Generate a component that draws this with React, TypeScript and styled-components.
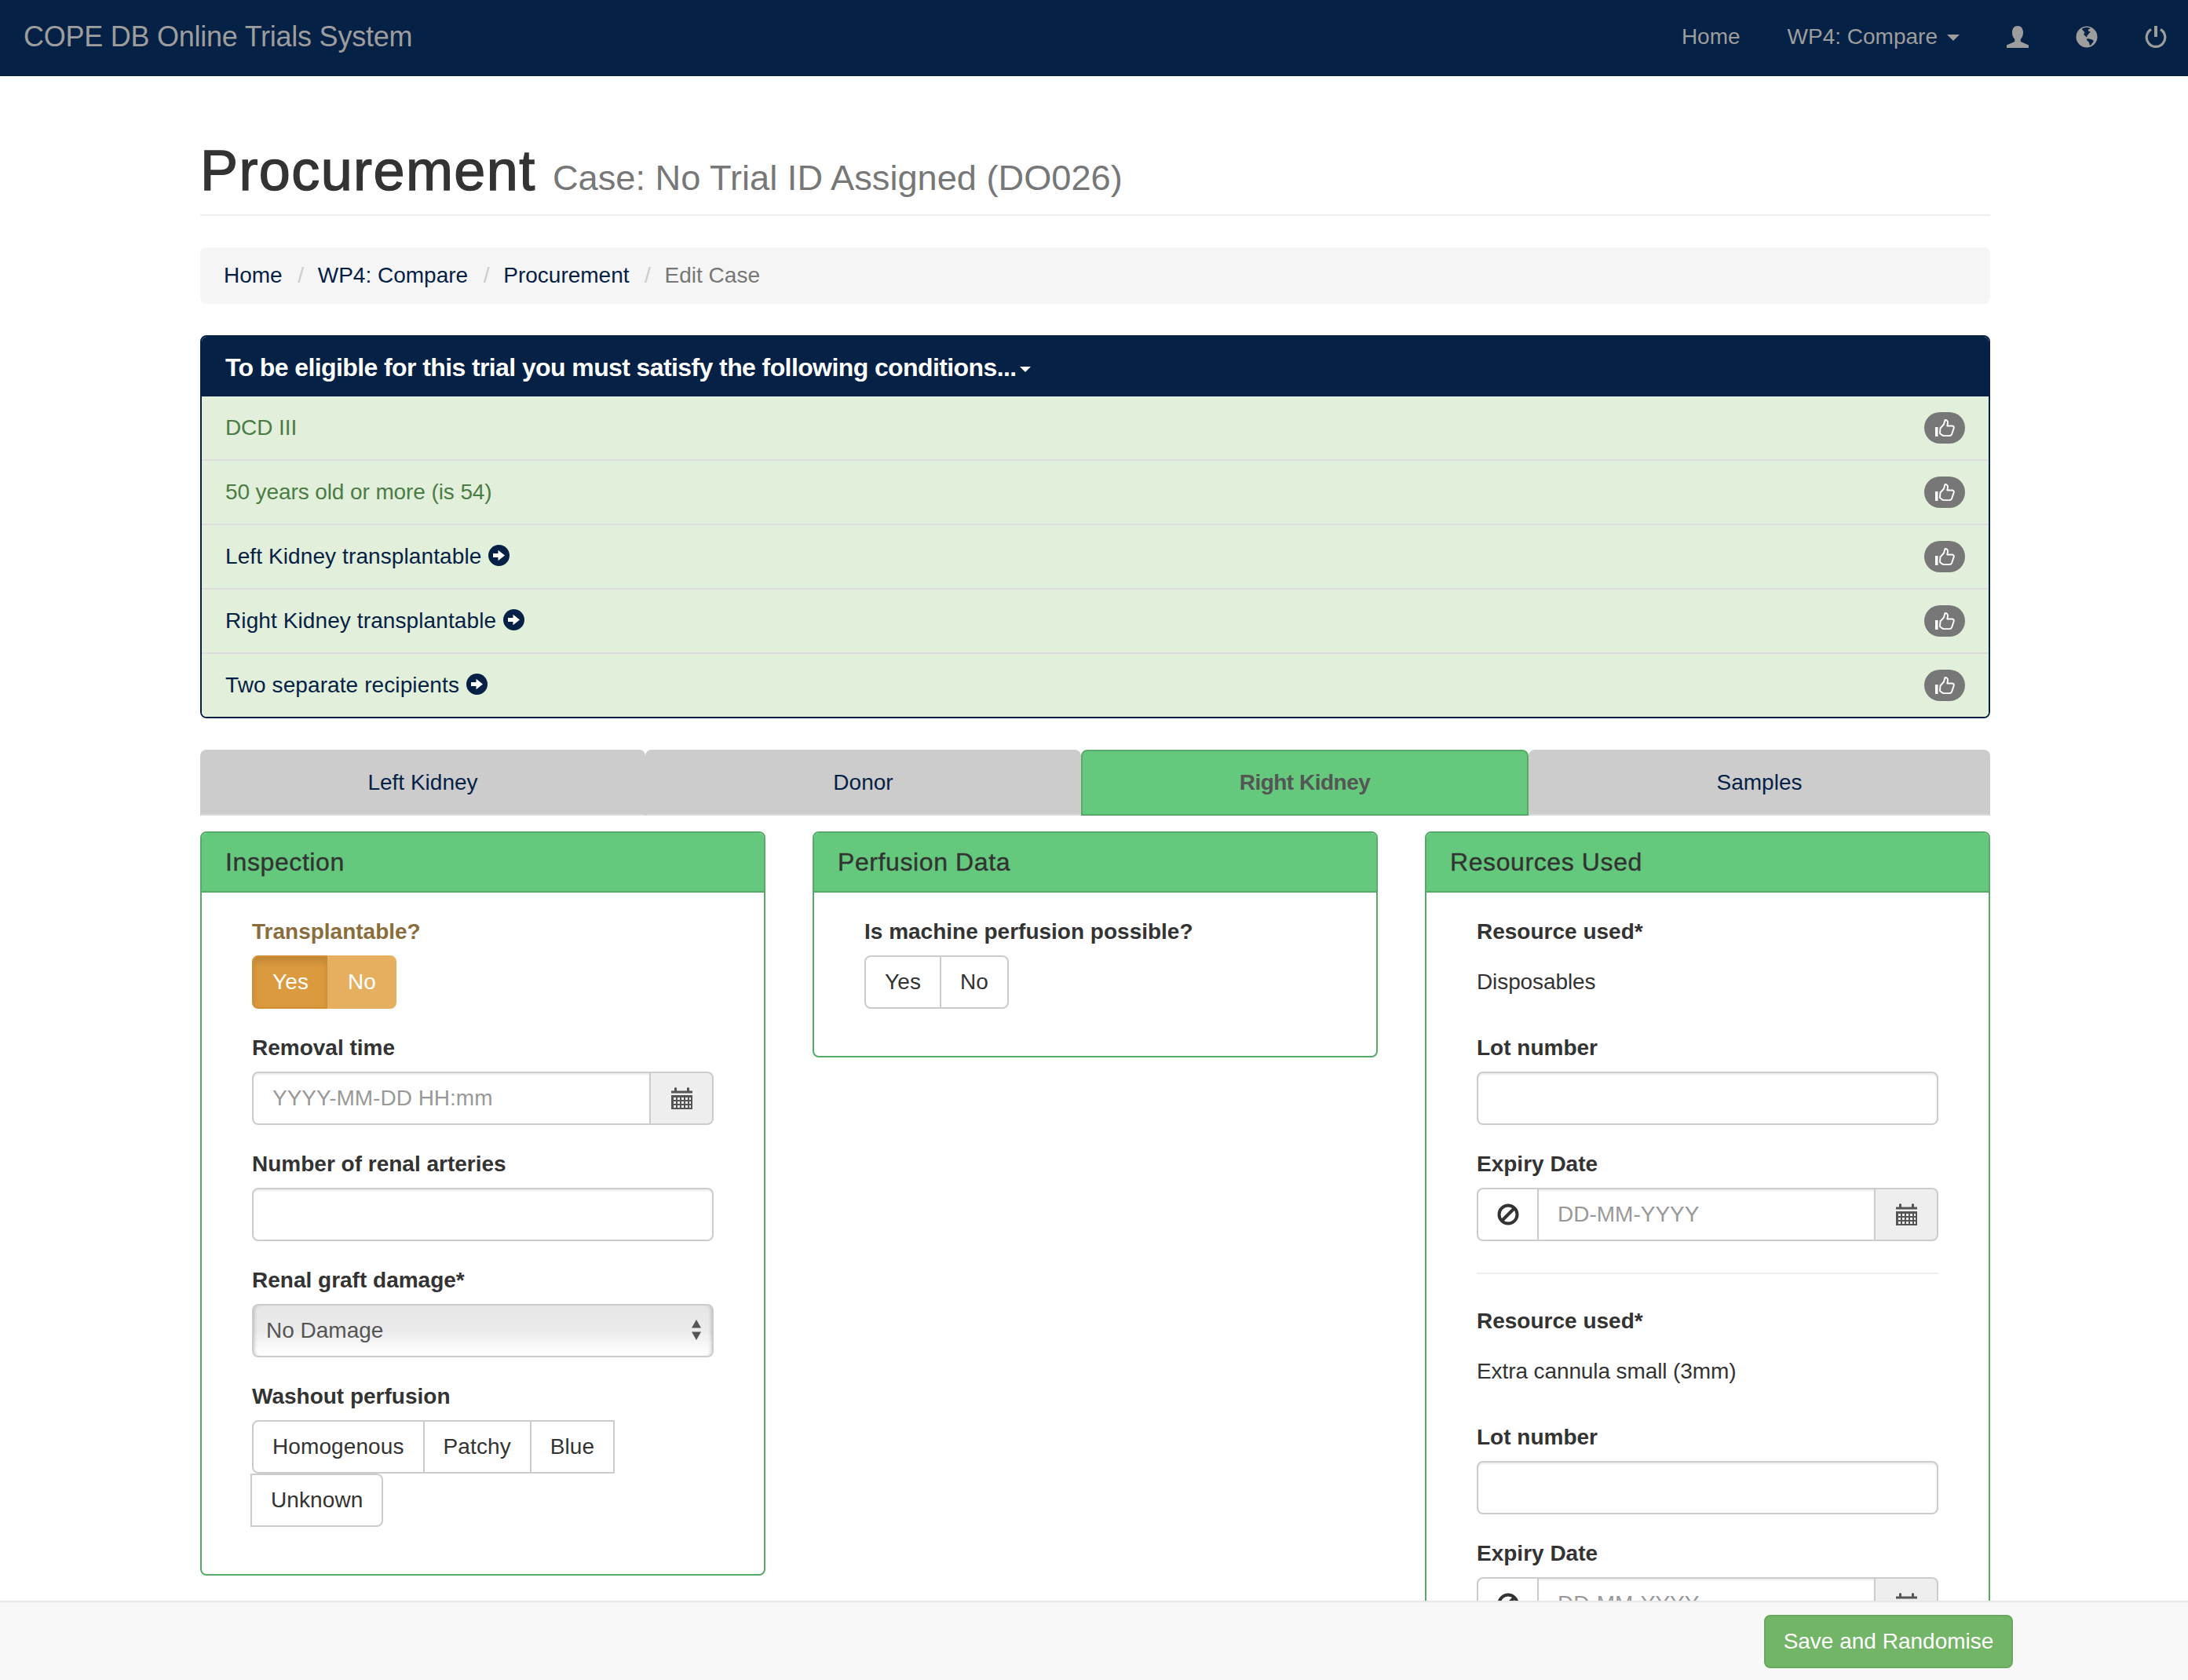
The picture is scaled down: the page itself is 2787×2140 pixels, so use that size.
import React from "react";
import styled, { createGlobalStyle } from "styled-components";

const navy = "#062146";
const green = "#64c97c";
const greenDark = "#56ab69";

const GlobalStyle = createGlobalStyle`
  html, body {
    margin: 0;
    height: 100%;
    overflow: hidden;
    background: #fff;
    font-family: "Liberation Sans", Arial, sans-serif;
    font-size: 28px;
    line-height: 40px;
    color: #333;
  }
  * { box-sizing: border-box; }
`;

const Page = styled.div`
  height: 100vh;
  overflow: hidden;
`;

const NavBar = styled.nav`
  height: 97px;
  background: ${navy};
  display: flex;
  align-items: center;
  justify-content: space-between;
  padding-left: 30px;
  color: #9d9d9d;
`;

const Brand = styled.div`
  font-size: 36px;
  letter-spacing: -0.25px;
  margin-top: -3px;
`;

const NavItems = styled.div`
  display: flex;
  align-items: center;
  height: 100%;
`;

const NavItem = styled.div`
  display: flex;
  align-items: center;
  padding: 0 30px;
  margin-top: -4px;
  &:last-child {
    padding-right: 27px;
  }
`;

const Caret = styled.span`
  display: inline-block;
  margin-left: 12px;
  margin-top: 2px;
  border-top: 8px solid currentColor;
  border-left: 8px solid transparent;
  border-right: 8px solid transparent;
`;

const Container = styled.main`
  width: 2280px;
  margin-left: 255px;
  padding-top: 81px;
`;

const PageHeader = styled.header`
  padding-bottom: 16px;
  border-bottom: 2px solid #eee;
  margin-bottom: 40px;
`;

const Title = styled.h1`
  margin: 0;
  font-size: 72px;
  line-height: 79px;
  font-weight: 400;
  letter-spacing: 1.4px;
  -webkit-text-stroke: 1.4px #333;
  color: #333;
`;

const Sub = styled.small`
  font-size: 45.2px;
  line-height: 1;
  font-weight: 400;
  letter-spacing: 0;
  -webkit-text-stroke: 0;
  color: #777;
`;

const Breadcrumb = styled.ol`
  list-style: none;
  margin: 0 0 40px;
  padding: 16px 30px;
  background: #f5f5f5;
  border-radius: 8px;
  display: flex;
`;

const Crumb = styled.li<{ $active?: boolean }>`
  color: ${(p) => (p.$active ? "#777" : navy)};
  &:not(:first-child)::before {
    content: "/\\00a0";
    color: #ccc;
    padding: 0 10px 0 19.5px;
  }
`;

const Panel = styled.section<{ $border: string }>`
  border: 2px solid ${(p) => p.$border};
  border-radius: 8px;
  overflow: hidden;
  background: #fff;
`;

const EligibilityHead = styled.div`
  margin: -2px -2px 0;
  height: 78px;
  padding: 22px 32px 18px;
  background: ${navy};
  color: #fff;
  font-size: 32px;
  font-weight: 700;
  line-height: 40px;
  letter-spacing: -0.6px;
  display: flex;
  align-items: center;
`;

const HeadCaret = styled(Caret)`
  margin-left: 4px;
  margin-top: 5px;
  border-top-width: 7px;
  border-left-width: 7px;
  border-right-width: 7px;
`;

const Row = styled.div<{ $done?: boolean }>`
  height: 82px;
  padding: 20px 30px;
  background: #e2efda;
  border-bottom: 2px solid #ddd;
  color: ${(p) => (p.$done ? "#4c7c45" : navy)};
  letter-spacing: ${(p) => (p.$done ? "-0.1px" : "0.1px")};
  display: flex;
  align-items: center;
  justify-content: space-between;
  &:last-child {
    border-bottom: 0;
    height: 80px;
  }
`;

const RowText = styled.span`
  display: flex;
  align-items: center;
  gap: 9px;
`;

const Badge = styled.span`
  width: 52px;
  height: 40px;
  border-radius: 20px;
  background: #777;
  display: flex;
  align-items: center;
  justify-content: center;
`;

const Tabs = styled.div`
  display: grid;
  grid-template-columns: 567px 555px 570px 588px;
  margin-top: 40px;
  margin-bottom: 20px;
  height: 84px;
`;

const Tab = styled.div<{ $active?: boolean }>`
  display: flex;
  align-items: center;
  justify-content: center;
  border-radius: 8px 8px 0 0;
  background: ${(p) => (p.$active ? green : "#ccc")};
  color: ${(p) => (p.$active ? "#555" : navy)};
  font-weight: ${(p) => (p.$active ? 700 : 400)};
  letter-spacing: ${(p) => (p.$active ? "-0.5px" : "0")};
  border: 2px solid ${(p) => (p.$active ? greenDark : "transparent")};
  border-bottom-color: ${(p) => (p.$active ? greenDark : "#ddd")};
`;

const Columns = styled.div`
  display: grid;
  grid-template-columns: repeat(3, 720px);
  gap: 60px;
  align-items: start;
`;

const PanelHead = styled.div`
  height: 76px;
  padding: 18px 30px;
  background: ${green};
  border-bottom: 2px solid ${greenDark};
  font-size: 32px;
  line-height: 38px;
  letter-spacing: 0.6px;
  -webkit-text-stroke: 0.4px #333;
  color: #333;
`;

const PanelBody = styled.div`
  padding: 30px 64px 30px;
`;

const Field = styled.div`
  margin-bottom: 30px;
`;

const Label = styled.label<{ $warn?: boolean }>`
  display: block;
  margin-bottom: 10px;
  font-weight: 700;
  color: ${(p) => (p.$warn ? "#8a6d3b" : "#333")};
`;

const Static = styled.div`
  padding: 14px 0;
  letter-spacing: -0.1px;
`;

const BtnGroup = styled.div`
  display: flex;
  flex-wrap: wrap;
`;

const Btn = styled.button<{ $tone?: "on" | "off" }>`
  height: 68px;
  padding: 12px 24px;
  font: inherit;
  line-height: 40px;
  letter-spacing: 0.1px;
  color: ${(p) => (p.$tone ? "#fff" : "#333")};
  background: ${(p) => (p.$tone === "on" ? "#dc9a3e" : p.$tone === "off" ? "#e6af60" : "#fff")};
  border: 2px solid ${(p) => (p.$tone === "on" ? "#d28f33" : p.$tone === "off" ? "#e6af60" : "#ccc")};
  box-shadow: ${(p) => (p.$tone === "on" ? "inset 0 6px 10px rgba(0,0,0,.125)" : "none")};
  margin-left: -2px;
  &:first-child {
    margin-left: 0;
    border-radius: 8px 0 0 8px;
  }
  &:last-child {
    border-radius: 0 8px 8px 0;
  }
`;

const InputGroup = styled.div`
  display: flex;
  height: 68px;
`;

const TextInput = styled.input<{ $joined?: "left" | "both" }>`
  flex: 1;
  min-width: 0;
  width: 100%;
  height: 68px;
  padding: 12px 24px;
  font: inherit;
  color: #555;
  background: #fff;
  border: 2px solid #ccc;
  border-radius: ${(p) => (p.$joined === "left" ? "8px 0 0 8px" : p.$joined === "both" ? "0" : "8px")};
  box-shadow: inset 0 2px 2px rgba(0, 0, 0, 0.075);
  &::placeholder {
    color: #999;
    opacity: 1;
  }
`;

const Addon = styled.span<{ $plain?: boolean }>`
  flex: none;
  width: ${(p) => (p.$plain ? "77px" : "80px")};
  display: flex;
  align-items: center;
  justify-content: center;
  background: ${(p) => (p.$plain ? "#fff" : "#eee")};
  border: 2px solid #ccc;
  border-radius: ${(p) => (p.$plain ? "8px 0 0 8px" : "0 8px 8px 0")};
  ${(p) => (p.$plain ? "border-right: 0;" : "border-left: 0;")}
`;

const SelectWrap = styled.div`
  position: relative;
  height: 68px;
`;

const Select = styled.select`
  appearance: none;
  width: 100%;
  height: 68px;
  padding: 0 16px;
  font: inherit;
  color: #555;
  border: 2px solid #ccc;
  border-radius: 8px;
  background: linear-gradient(#e6e6e6 0%, #ebebeb 50%, #fafafa 85%, #fff 100%);
  box-shadow: inset 4px 0 4px -3px rgba(0, 0, 0, 0.2), inset -4px 0 4px -3px rgba(0, 0, 0, 0.2);
`;

const SelectArrows = styled.svg`
  position: absolute;
  right: 16px;
  top: 20px;
  pointer-events: none;
`;

const Divider = styled.hr`
  border: 0;
  border-top: 2px solid #eee;
  margin: 40px 0;
`;

const Footer = styled.footer`
  position: fixed;
  left: 0;
  right: 0;
  bottom: 0;
  height: 101px;
  padding: 16px 223px 0 0;
  background: #f8f8f8;
  border-top: 2px solid #e7e7e7;
  display: flex;
  justify-content: flex-end;
  align-items: flex-start;
`;

const SaveBtn = styled.button`
  width: 317px;
  height: 68px;
  font: inherit;
  color: #fff;
  background: #72b566;
  border: 2px solid #68a95d;
  border-radius: 8px;
  padding: 0;
`;

const ArrowSvg = styled.svg`
  margin-top: -4px;
`;

const UserIcon = () => (
  <svg width="28" height="28" viewBox="0 0 28 28" fill="#9d9d9d">
    <path d="M14 0c4.5 0 7 3.4 7 8.4 0 3.5-1.3 6.5-3.2 8.3v3.4L28 24.6V28H0v-3.4l10.2-4.5v-3.4C8.3 15 7 12 7 8.4 7 3.4 9.5 0 14 0z" />
  </svg>
);

const GlobeIcon = () => (
  <svg width="28" height="28" viewBox="0 0 28 28">
    <circle cx="14" cy="14" r="13.5" fill="#9d9d9d" />
    <path
      fill={navy}
      d="M8 3.5c2-1.3 6-2 9.5-1 1 .5 1 1.2 0 1.5-1.5.3-2 1-1.5 2 .5 1.2 1.5 1 2.5 1.5.5.8-.5 1.5-1.5 1.5-.5 1-.5 2-1.5 2.5-1 .3-1.5 1-1 2 .3.8-.5 1-1.3.5-.8-1-1.5-2-2.7-2.5-.5-1.5.5-2.5 1-3.5-.5-1-1.500-.8-2-1.8-.3-1-.8-1.5-1.500-1.700z"
    />
    <path
      fill={navy}
      d="M14 16.5c1.5-.5 3.5 0 5 .5 1.2.5 2.5.5 3.5 1.5.5.8 0 1.7-.8 2.5-1 1-1.5 2.500-2.700 3.500-.8.5-1.5 0-1.5-1 0-1.500-.5-2.500-1.500-3.500-.8-1-2-1.500-2-3 0-.2.2-.4.5-.5z"
    />
  </svg>
);

const PowerIcon = () => (
  <svg width="28" height="28" viewBox="0 0 28 28" fill="none" stroke="#9d9d9d">
    <path strokeWidth="3.2" d="M8 4.5a11.8 11.8 0 1 0 12 0" />
    <path strokeWidth="4" d="M14 0v14" />
  </svg>
);

const ArrowIcon = () => (
  <ArrowSvg width="27" height="27" viewBox="0 0 27 27">
    <circle cx="13.5" cy="13.5" r="13.5" fill={navy} />
    <path fill="#fff" d="M6 11h6.5V6.8l8.5 6.700-8.500 6.700V16H6z" />
  </ArrowSvg>
);

const ThumbIcon = () => (
  <svg width="25" height="23" viewBox="0 0 25 23">
    <rect x="0" y="10" width="3.5" height="12" fill="#fff" />
    <path
      fill="none"
      stroke="#fff"
      strokeWidth="1.9"
      strokeLinejoin="round"
      d="M6.5 11.5 11 6.5 12.5 1c2.5 0 3.8 1.5 3.5 3.8L15.3 8.5h6.2c1.6 0 2.7 1.4 2.2 2.9l-2.6 7.700c-.5 1.3-1.7 2-3 2h-6.800c-1.400 0-2.300-.5-3.300-1.400l-2-1.700z"
    />
  </svg>
);

const CalendarIcon = () => (
  <svg width="27" height="28" viewBox="0 0 27 28" fill="#555">
    <path d="M0 7.5V4.5h4V1.5a1.5 1.5 0 0 1 3 0v3h13V1.5a1.5 1.5 0 0 1 3 0v3h4v3z" />
    <path
      fillRule="evenodd"
      d="M0 10h27v18H0zM3 13v3h3v-3zM8 13v3h3v-3zM13 13v3h3v-3zM18 13v3h3v-3zM23 13v3h2v-3zM3 18v3h3v-3zM8 18v3h3v-3zM13 18v3h3v-3zM18 18v3h3v-3zM23 18v3h2v-3zM3 23v3h3v-3zM8 23v3h3v-3zM13 23v3h3v-3zM18 23v3h3v-3zM23 23v3h2v-3z"
    />
  </svg>
);

const BanIcon = () => (
  <svg width="28" height="28" viewBox="0 0 28 28" fill="none" stroke="#333" strokeWidth="4">
    <circle cx="14" cy="14" r="11.5" />
    <path d="M6 22 22 6" />
  </svg>
);

const conditions = [
  { text: "DCD III", done: true },
  { text: "50 years old or more (is 54)", done: true },
  { text: "Left Kidney transplantable" },
  { text: "Right Kidney transplantable" },
  { text: "Two separate recipients" },
];

function ExpiryField() {
  return (
    <Field>
      <Label>Expiry Date</Label>
      <InputGroup>
        <Addon $plain>
          <BanIcon />
        </Addon>
        <TextInput $joined="both" placeholder="DD-MM-YYYY" />
        <Addon>
          <CalendarIcon />
        </Addon>
      </InputGroup>
    </Field>
  );
}

function ResourceBlock({ name }: { name: string }) {
  return (
    <>
      <Field>
        <Label>Resource used*</Label>
        <Static>{name}</Static>
      </Field>
      <Field>
        <Label>Lot number</Label>
        <TextInput />
      </Field>
      <ExpiryField />
    </>
  );
}

export default function App() {
  return (
    <Page>
      <GlobalStyle />
      <NavBar>
        <Brand>COPE DB Online Trials System</Brand>
        <NavItems>
          <NavItem>Home</NavItem>
          <NavItem>
            WP4: Compare
            <Caret />
          </NavItem>
          <NavItem>
            <UserIcon />
          </NavItem>
          <NavItem>
            <GlobeIcon />
          </NavItem>
          <NavItem>
            <PowerIcon />
          </NavItem>
        </NavItems>
      </NavBar>

      <Container>
        <PageHeader>
          <Title>
            Procurement <Sub>Case: No Trial ID Assigned (DO026)</Sub>
          </Title>
        </PageHeader>

        <Breadcrumb>
          <Crumb>Home</Crumb>
          <Crumb>WP4: Compare</Crumb>
          <Crumb>Procurement</Crumb>
          <Crumb $active>Edit Case</Crumb>
        </Breadcrumb>

        <Panel $border={navy}>
          <EligibilityHead>
            To be eligible for this trial you must satisfy the following conditions...
            <HeadCaret />
          </EligibilityHead>
          {conditions.map((c) => (
            <Row key={c.text} $done={c.done}>
              <RowText>
                {c.text}
                {!c.done && <ArrowIcon />}
              </RowText>
              <Badge>
                <ThumbIcon />
              </Badge>
            </Row>
          ))}
        </Panel>

        <Tabs>
          <Tab>Left Kidney</Tab>
          <Tab>Donor</Tab>
          <Tab $active>Right Kidney</Tab>
          <Tab>Samples</Tab>
        </Tabs>

        <Columns>
          <Panel $border={greenDark}>
            <PanelHead>Inspection</PanelHead>
            <PanelBody>
              <Field>
                <Label $warn>Transplantable?</Label>
                <BtnGroup>
                  <Btn $tone="on">Yes</Btn>
                  <Btn $tone="off">No</Btn>
                </BtnGroup>
              </Field>
              <Field>
                <Label>Removal time</Label>
                <InputGroup>
                  <TextInput $joined="left" placeholder="YYYY-MM-DD HH:mm" />
                  <Addon>
                    <CalendarIcon />
                  </Addon>
                </InputGroup>
              </Field>
              <Field>
                <Label>Number of renal arteries</Label>
                <TextInput />
              </Field>
              <Field>
                <Label>Renal graft damage*</Label>
                <SelectWrap>
                  <Select defaultValue="none">
                    <option value="none">No Damage</option>
                  </Select>
                  <SelectArrows width="12" height="26" viewBox="0 0 12 26" fill="#555">
                    <path d="M6 0l6 10.5H0zM6 26l6-10.5H0z" />
                  </SelectArrows>
                </SelectWrap>
              </Field>
              <Field>
                <Label>Washout perfusion</Label>
                <BtnGroup>
                  <Btn>Homogenous</Btn>
                  <Btn>Patchy</Btn>
                  <Btn>Blue</Btn>
                  <Btn>Unknown</Btn>
                </BtnGroup>
              </Field>
            </PanelBody>
          </Panel>

          <Panel $border={greenDark}>
            <PanelHead>Perfusion Data</PanelHead>
            <PanelBody>
              <Field>
                <Label>Is machine perfusion possible?</Label>
                <BtnGroup>
                  <Btn>Yes</Btn>
                  <Btn>No</Btn>
                </BtnGroup>
              </Field>
            </PanelBody>
          </Panel>

          <Panel $border={greenDark}>
            <PanelHead>Resources Used</PanelHead>
            <PanelBody>
              <ResourceBlock name="Disposables" />
              <Divider />
              <ResourceBlock name="Extra cannula small (3mm)" />
            </PanelBody>
          </Panel>
        </Columns>
      </Container>

      <Footer>
        <SaveBtn>Save and Randomise</SaveBtn>
      </Footer>
    </Page>
  );
}
